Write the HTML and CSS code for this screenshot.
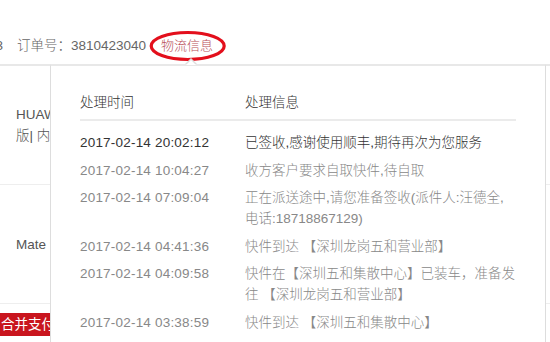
FILE: index.html
```html
<!DOCTYPE html>
<html lang="zh-CN">
<head>
    <meta charset="UTF-8">
    <meta name="viewport" content="width=device-width, initial-scale=1.0">
    <title>订单详情 - 物流信息</title>
    <link rel="stylesheet" href="styles.css">
</head>
<body>
    <div class="page">
        <div class="order-bar">
            <span class="order-date"><span>下单时间：2017-02-13</span></span>
            <span class="order-no">订单号：3810423040</span>
            <a class="logistics-link" href="#">物流信息
                <svg class="mark" viewBox="0 0 80 32" width="80" height="32">
                    <ellipse cx="40.7" cy="16" rx="36.5" ry="13.5" fill="none" stroke="#e30f1c" stroke-width="3.2"></ellipse>
                </svg>
            </a>
        </div>

        <div class="goods-row">
            <div class="goods-name">HUAWEI Mate 9 4GB+64GB 全网通<br>版| 内存 64GB 月光银</div>
        </div>
        <div class="goods-row">
            <div class="goods-name">Mate 9 原装保护壳 透明</div>
        </div>

        <div class="pay-bar">
            <button class="pay-btn">合并支付</button>
        </div>

        <!-- 物流信息 popup -->
        <div class="logistics-pop">
            <div class="log-head">
                <span>处理时间</span>
                <span>处理信息</span>
            </div>
            <ul class="log-list">
                <li class="latest">
                    <span class="log-time">2017-02-14 20:02:12</span>
                    <span class="log-text">已签收,感谢使用顺丰,期待再次为您服务</span>
                </li>
                <li>
                    <span class="log-time">2017-02-14 10:04:27</span>
                    <span class="log-text">收方客户要求自取快件,待自取</span>
                </li>
                <li>
                    <span class="log-time">2017-02-14 07:09:04</span>
                    <span class="log-text">正在派送途中,请您准备签收(派件人:汪德全,电话:18718867129)</span>
                </li>
                <li>
                    <span class="log-time">2017-02-14 04:41:36</span>
                    <span class="log-text">快件到达 【深圳龙岗五和营业部】</span>
                </li>
                <li>
                    <span class="log-time">2017-02-14 04:09:58</span>
                    <span class="log-text">快件在【深圳五和集散中心】已装车，准备发往 【深圳龙岗五和营业部】</span>
                </li>
                <li>
                    <span class="log-time">2017-02-14 03:38:59</span>
                    <span class="log-text">快件到达 【深圳五和集散中心】</span>
                </li>
            </ul>
        </div>
    </div>
</body>
</html>
```

FILE: styles.css
```css
* {
    margin: 0;
    padding: 0;
    box-sizing: border-box;
}

body {
    font-family: "Liberation Sans", "Noto Sans CJK SC", sans-serif;
    font-size: 13.5px;
    font-weight: 300;
    color: #333;
    background: #fff;
    overflow: hidden;
}

.page {
    position: relative;
    width: 550px;
    height: 342px;
    overflow: hidden;
}

/* Order header */
.order-bar {
    display: flex;
    align-items: flex-start;
    height: 66px;
    padding-top: 36px;
    line-height: 20px;
    color: #666;
    border-bottom: 2px solid #e8e8e8;
}

.order-date {
    width: 3px;
    overflow: hidden;
    display: flex;
    justify-content: flex-end;
    white-space: nowrap;
}

.order-no {
    margin-left: 14px;
}

.logistics-link {
    position: relative;
    display: inline-block;
    margin-left: 15px;
    font-size: 13px;
    color: #b9505a;
    text-decoration: none;
}

.logistics-link .mark {
    position: absolute;
    left: -14px;
    top: -6px;
}

/* Goods rows */
.goods-row {
    height: 119px;
    display: flex;
    align-items: center;
    padding-left: 16px;
    border-bottom: 1px solid #eee;
    line-height: 21px;
    color: #555;
}

.goods-name {
    width: 34px;
    overflow: hidden;
    white-space: nowrap;
}

.pay-bar {
    width: 50px;
    overflow: hidden;
    padding-top: 9px;
}

.pay-btn {
    height: 23px;
    padding: 0 16px 0 1px;
    border: none;
    background: #c9151e;
    color: #fff;
    font-family: inherit;
    font-size: 13.5px;
    line-height: 23px;
    white-space: nowrap;
}

/* Logistics popup */
.logistics-pop {
    position: absolute;
    left: 50px;
    top: 64px;
    width: 496px;
    height: 300px;
    background: #fff;
    border: 1px solid #ddd;
    border-top: 2px solid #e8e8e8;
    padding: 0 29px;
}

.logistics-pop::before,
.logistics-pop::after {
    content: "";
    position: absolute;
    border-style: solid;
    border-color: transparent;
    border-top-width: 0;
}

.logistics-pop::before {
    left: 134px;
    top: -8px;
    border-width: 0 6px 6px;
    border-bottom-color: #ddd;
}

.logistics-pop::after {
    left: 135px;
    top: -6px;
    border-width: 0 5px 5px;
    border-bottom-color: #fff;
}

.log-head {
    display: grid;
    grid-template-columns: 165px 1fr;
    padding: 26px 0 6px;
    border-bottom: 2px solid #ebebeb;
    line-height: 21px;
    color: #333;
}

.log-list {
    list-style: none;
    padding-top: 8px;
}

.log-list li {
    display: grid;
    grid-template-columns: 165px 1fr;
    padding: 3px 0 3.5px;
    line-height: 21px;
    color: #888;
}

.log-list li.latest {
    color: #333;
}

.log-time {
    letter-spacing: 0.2px;
}
```
